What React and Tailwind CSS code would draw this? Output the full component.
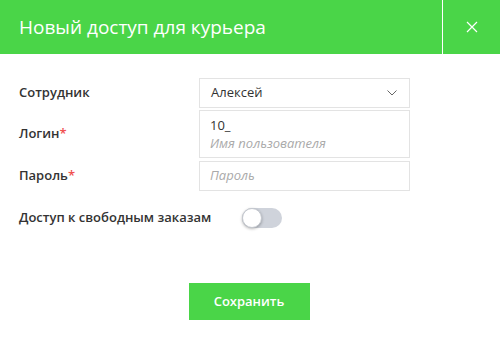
const Field = ({ label, required, children, align = "items-center" }) => (
  <div className={`flex ${align}`}>
    <div className="w-[180px] shrink-0 text-[13px] font-semibold text-[#333]">
      {label}
      {required && <span className="text-[#f0504f]">*</span>}
    </div>
    {children}
  </div>
);

export default function App() {
  return (
    <div
      className="w-[500px] h-[340px] bg-white"
      style={{ fontFamily: '"Open Sans", sans-serif' }}
    >
      <div className="h-[54px] bg-[#4ad548] flex items-stretch">
        <div className="flex-1 flex items-center pl-[19px] text-[19px] text-white">
          Новый доступ для курьера
        </div>
        <div className="w-px bg-white" />
        <div className="w-[57px] flex items-center justify-center">
          <svg width="12" height="12" viewBox="0 0 12 12" stroke="white" strokeWidth="1.2">
            <path d="M1 1 L11 11 M11 1 L1 11" />
          </svg>
        </div>
      </div>

      <div className="pl-[19px] pt-[24px] flex flex-col">
        <Field label="Сотрудник">
          <div className="w-[211px] h-[30px] border border-[#e3e3e3] flex items-center justify-between pl-[11px] pr-[12px] text-[13px] text-[#333]">
            <span>Алексей</span>
            <svg width="10" height="6" viewBox="0 0 10 6" fill="none" stroke="#666" strokeWidth="1">
              <path d="M0.5 0.5 L5 5 L9.5 0.5" />
            </svg>
          </div>
        </Field>
        <div className="mt-[2px]">
          <Field label="Логин" required>
            <div className="w-[211px] h-[48px] border border-[#e3e3e3] flex flex-col justify-center pl-[10px] leading-[18px]">
              <span className="text-[13px] text-[#333]">10_</span>
              <span className="text-[13px] italic text-[#aaa]">Имя пользователя</span>
            </div>
          </Field>
        </div>
        <div className="mt-[3px]">
          <Field label="Пароль" required>
            <div className="w-[211px] h-[30px] border border-[#e3e3e3] flex items-center pl-[10px] text-[13px] italic text-[#aaa]">
              Пароль
            </div>
          </Field>
        </div>
        <div className="mt-[17px] flex items-center h-[20px]">
          <span className="text-[13px] font-semibold text-[#333]">Доступ к свободным заказам</span>
          <div className="ml-[31px] w-[40px] h-[20px] rounded-full bg-[#cfd3db] relative">
            <div className="absolute left-0 top-0 w-[20px] h-[20px] rounded-full bg-white border border-[#c4c8cf] shadow-[0_1px_3px_rgba(0,0,0,0.3)]" />
          </div>
        </div>
      </div>

      <div className="flex justify-center pt-[55px] pr-[2px]">
        <div className="w-[121px] h-[37px] bg-[#4ad548] flex items-center justify-center text-[13px] font-semibold text-white">
          Сохранить
        </div>
      </div>
    </div>
  );
}
